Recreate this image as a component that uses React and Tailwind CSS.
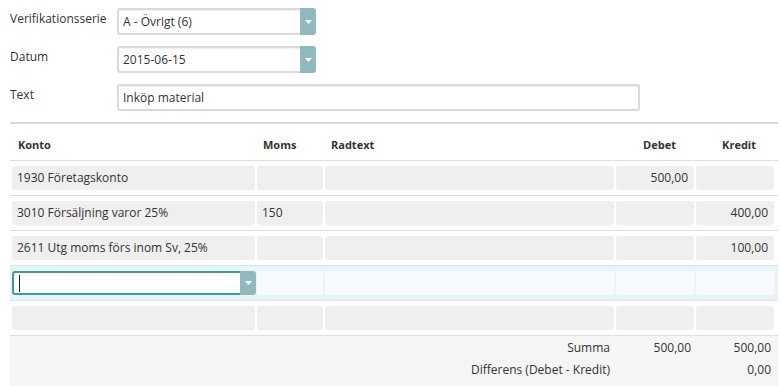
import React from "react";

const Caret = () => (
  <svg width="7" height="4" viewBox="0 0 7 4" className="block">
    <path d="M0 0 L7 0 L3.5 4 Z" fill="#ffffff" />
  </svg>
);

const SelectBox = ({ value, width }) => (
  <div className="flex h-[27px]" style={{ width }}>
    <div className="flex-1 flex items-center pl-[4px] border-2 border-r-0 border-[#dadada] rounded-l-[3px] bg-white text-[12px] text-[#333] shadow-[inset_0_1px_1px_rgba(0,0,0,0.06)]">
      {value}
    </div>
    <div className="w-[16px] bg-[#8fb9bd] rounded-r-[3px] flex items-center justify-center">
      <Caret />
    </div>
  </div>
);

const rows = [
  { konto: "1930 Företagskonto", moms: "", debet: "500,00", kredit: "" },
  { konto: "3010 Försäljning varor 25%", moms: "150", debet: "", kredit: "400,00" },
  { konto: "2611 Utg moms förs inom Sv, 25%", moms: "", debet: "", kredit: "100,00" },
];

const Cell = ({ children, right, light }) => (
  <div className="p-[1px]">
    <div
      className={`h-[24px] rounded-[3px] flex items-center px-[5px] ${
        light ? "bg-[#f7fbfb]" : "bg-[#efefef]"
      } ${right ? "justify-end pr-[6px]" : ""}`}
    >
      {children}
    </div>
  </div>
);

const cols = "grid grid-cols-[245px_68px_291px_80px_80px]";

const App = () => {
  return (
    <main
      className="w-[781px] h-[386px] bg-white text-[#333] text-[12px] overflow-hidden pl-[10px] pr-[3px] pt-[8px]"
      style={{ fontFamily: '"Open Sans", "Liberation Sans", sans-serif' }}
    >
      <div className="flex flex-col gap-[11px]">
        <div className="flex">
          <label className="w-[107px] pt-[3px] leading-[16px]">Verifikationsserie</label>
          <SelectBox value="A - Övrigt (6)" width={199} />
        </div>
        <div className="flex">
          <label className="w-[107px] pt-[3px] leading-[16px]">Datum</label>
          <SelectBox value="2015-06-15" width={199} />
        </div>
        <div className="flex">
          <label className="w-[107px] pt-[3px] leading-[16px]">Text</label>
          <div className="w-[523px] h-[27px] flex items-center pl-[4px] border-2 border-[#dadada] rounded-[3px] bg-white shadow-[inset_0_1px_1px_rgba(0,0,0,0.06)]">
            Inköp material
          </div>
        </div>
      </div>

      <div className="mt-[11px] h-[2px] bg-[#d9d9d9]" />

      <div className="pl-[1px] border-b border-[#dddddd] h-[37px] flex items-end">
        <div className={`${cols} w-full pb-[8px] text-[11px] font-bold leading-[14px]`}>
          <div className="pl-[7px]">Konto</div>
          <div className="pl-[7px]">Moms</div>
          <div className="pl-[7px]">Radtext</div>
          <div className="text-right pr-[19px]">Debet</div>
          <div className="text-right pr-[19px]">Kredit</div>
        </div>
      </div>

      {rows.map((r, i) => (
        <div
          key={i}
          className={`pl-[1px] py-[4px] border-b ${
            i === 2 ? "border-[#d3e6ea]" : "border-[#dddddd]"
          }`}
        >
          <div className={cols}>
            <Cell>{r.konto}</Cell>
            <Cell>{r.moms}</Cell>
            <Cell></Cell>
            <Cell right>{r.debet}</Cell>
            <Cell right>{r.kredit}</Cell>
          </div>
        </div>
      ))}

      <div className="pl-[1px] py-[4px] border-b border-[#d3e6ea] bg-[#e9f4f7]">
        <div className={cols}>
          <div className="p-[1px] pr-0">
            <div className="h-[24px] flex">
              <div className="flex-1 border-2 border-r-0 border-[#3e9a9c] rounded-l-[3px] bg-white flex items-center pl-[5px]">
                <div className="w-[1px] h-[17px] bg-[#222]" />
              </div>
              <div className="w-[16px] bg-[#8fb9bd] rounded-r-[3px] flex items-center justify-center">
                <Caret />
              </div>
            </div>
          </div>
          <Cell light></Cell>
          <Cell light></Cell>
          <Cell light></Cell>
          <Cell light></Cell>
        </div>
      </div>

      <div className="pl-[1px] py-[4px] border-b border-[#dddddd]">
        <div className={cols}>
          <Cell></Cell>
          <Cell></Cell>
          <Cell></Cell>
          <Cell></Cell>
          <Cell></Cell>
        </div>
      </div>

      <div className="bg-[#f5f5f5] h-[60px] pl-[1px] pt-[1px]">
        <div className={`${cols} h-[22px] leading-[22px]`}>
          <div />
          <div />
          <div className="text-right pr-[5px]">Summa</div>
          <div className="text-right pr-[4px]">500,00</div>
          <div className="text-right pr-[4px]">500,00</div>
        </div>
        <div className={`${cols} h-[22px] leading-[22px]`}>
          <div />
          <div />
          <div className="text-right pr-[5px]">Differens (Debet - Kredit)</div>
          <div />
          <div className="text-right pr-[4px]">0,00</div>
        </div>
      </div>
    </main>
  );
};

export default App;
